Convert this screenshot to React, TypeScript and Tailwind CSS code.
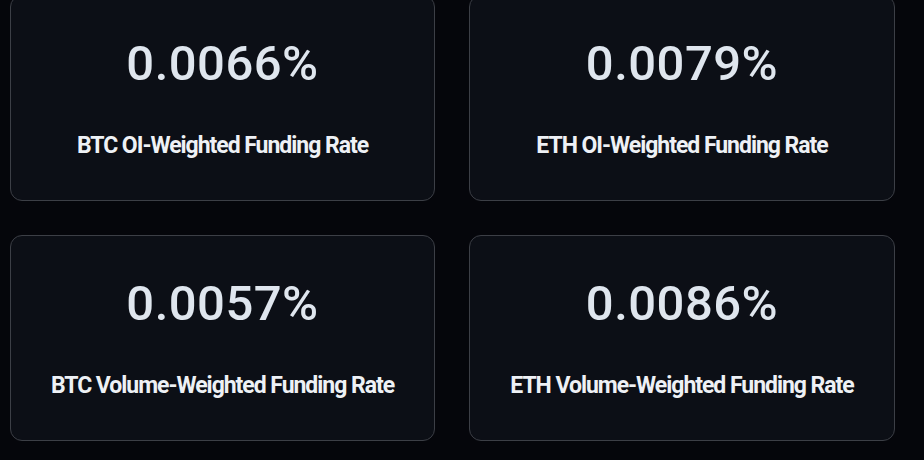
const stats = [
  { value: "0.0066%", label: "BTC OI-Weighted Funding Rate" },
  { value: "0.0079%", label: "ETH OI-Weighted Funding Rate" },
  { value: "0.0057%", label: "BTC Volume-Weighted Funding Rate" },
  { value: "0.0086%", label: "ETH Volume-Weighted Funding Rate" },
];

export default function App() {
  return (
    <div className="w-[924px] h-[460px] overflow-hidden bg-[#05060b] font-['Roboto',sans-serif]">
      <div className="grid grid-cols-[425px_426px] gap-x-[34px] gap-y-[34px] pl-[10px] -mt-[5px]">
        {stats.map((s) => (
          <div
            key={s.label}
            className="h-[206px] rounded-[12px] border border-[#3c3f46] bg-[#0c0f16] flex flex-col items-center"
          >
            <div className="mt-[38px] text-[49px] leading-[60px] font-medium tracking-[0.01em] text-[#dfe6ee]">
              {s.value}
            </div>
            <div className="mt-[38px] text-[23px] leading-[28px] font-bold tracking-[-0.045em] text-[#eef1f5]">
              {s.label}
            </div>
          </div>
        ))}
      </div>
    </div>
  );
}
